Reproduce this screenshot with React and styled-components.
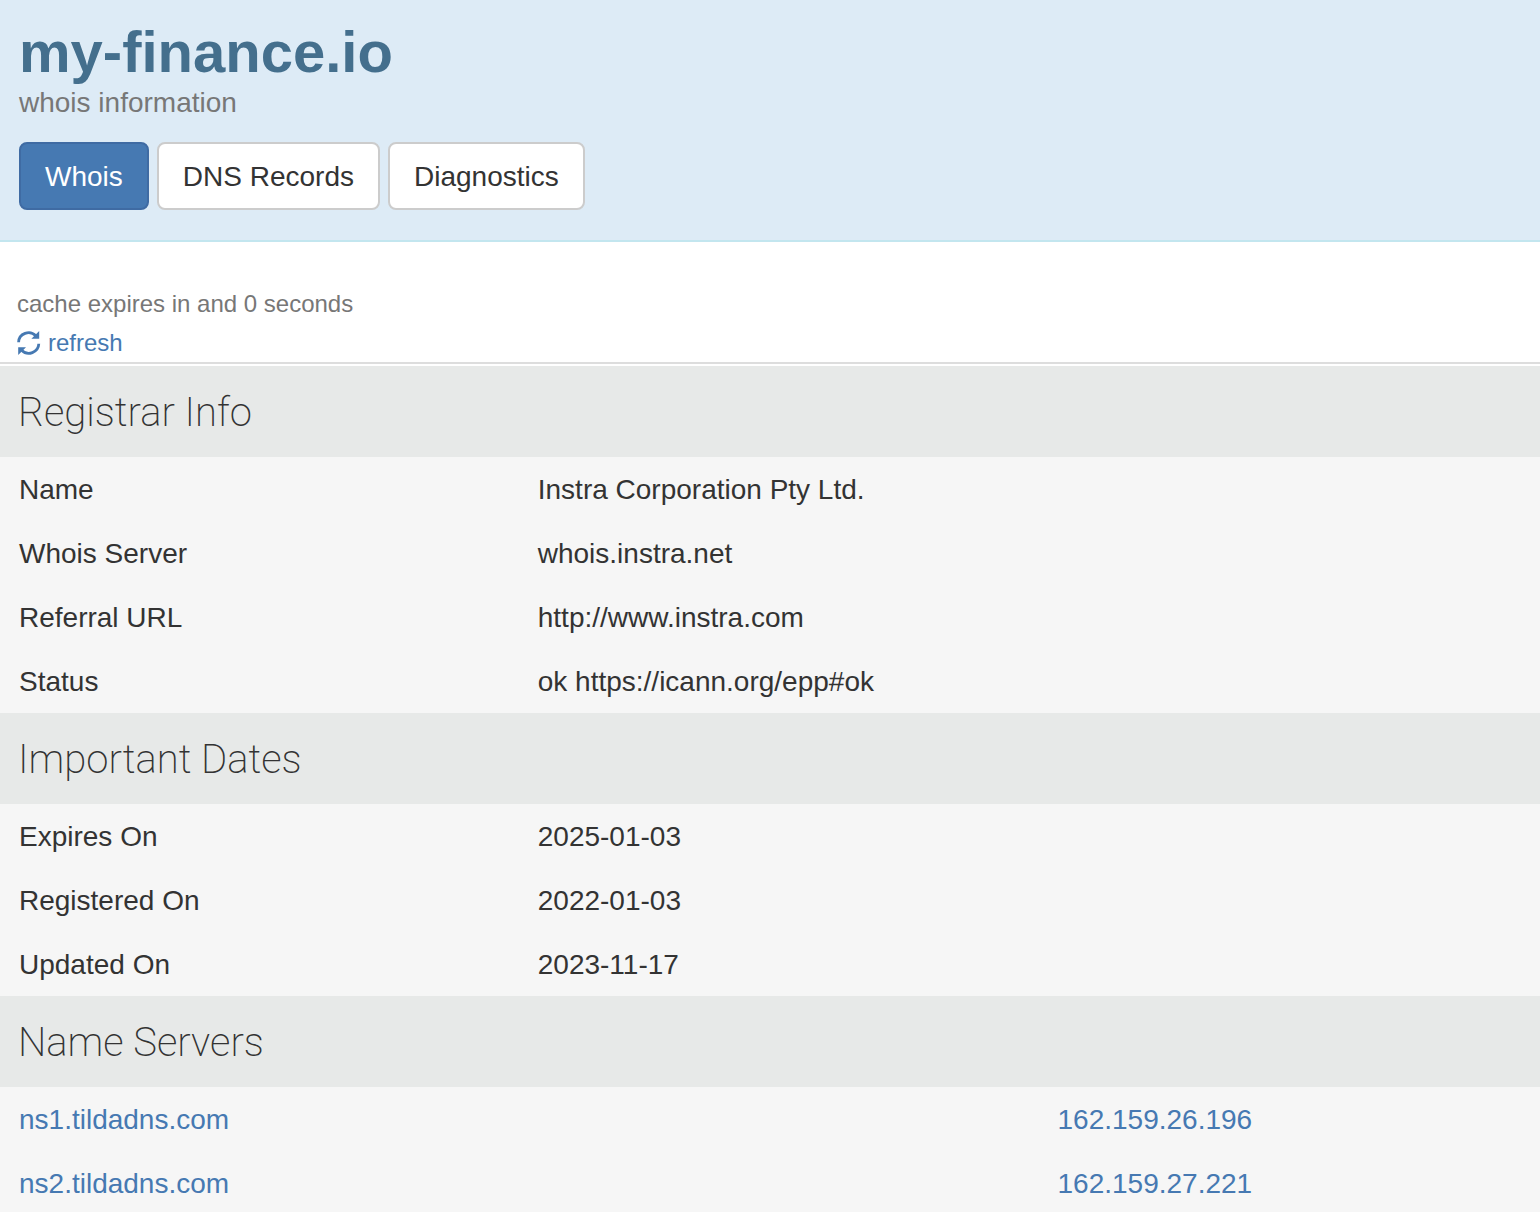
import React from "react";
import styled, { createGlobalStyle } from "styled-components";

const registrar = [
  ["Name", "Instra Corporation Pty Ltd."],
  ["Whois Server", "whois.instra.net"],
  ["Referral URL", "http://www.instra.com"],
  ["Status", "ok https://icann.org/epp#ok"],
];

const dates = [
  ["Expires On", "2025-01-03"],
  ["Registered On", "2022-01-03"],
  ["Updated On", "2023-11-17"],
];

const nameServers = [
  ["ns1.tildadns.com", "162.159.26.196"],
  ["ns2.tildadns.com", "162.159.27.221"],
];

const RefreshIcon = () => (
  <Icon viewBox="0 0 24 24" aria-hidden="true">
    <path
      d="M1.600 11.200A10 9.800 0 0 1 18.800 4.800M21.800 12.800A10 9.800 0 0 1 4.600 19.200"
      fill="none"
      stroke="currentColor"
      strokeWidth="2.8"
    />
    <path d="M22.200 0v7.800h-7.800zM1.200 24v-7.800h7.800z" />
  </Icon>
);

const InfoSection = ({ title, rows }) => (
  <section>
    <SectionTitle>{title}</SectionTitle>
    <Table>
      <tbody>
        {rows.map(([label, value]) => (
          <tr key={label}>
            <Label scope="row">{label}</Label>
            <Cell>{value}</Cell>
          </tr>
        ))}
      </tbody>
    </Table>
  </section>
);

const App = () => {
  return (
    <>
      <GlobalStyle />
      <Header>
        <Title>my-finance.io</Title>
        <Subtitle>whois information</Subtitle>
        <Tabs>
          <Tab type="button" $active>
            Whois
          </Tab>
          <Tab type="button">DNS Records</Tab>
          <Tab type="button">Diagnostics</Tab>
        </Tabs>
      </Header>

      <main>
        <Cache>
          <CacheText>cache expires in and 0 seconds</CacheText>
          <Refresh href="#refresh">
            <RefreshIcon />
            refresh
          </Refresh>
        </Cache>

        <InfoSection title="Registrar Info" rows={registrar} />
        <InfoSection title="Important Dates" rows={dates} />

        <section>
          <SectionTitle>Name Servers</SectionTitle>
          <Table>
            <tbody>
              {nameServers.map(([host, ip]) => (
                <tr key={host}>
                  <Label scope="row" $wide>
                    <Link href={`#${host}`}>{host}</Link>
                  </Label>
                  <Cell>
                    <Link href={`#${ip}`}>{ip}</Link>
                  </Cell>
                </tr>
              ))}
            </tbody>
          </Table>
        </section>
      </main>
    </>
  );
};

export default App;

const GlobalStyle = createGlobalStyle`
  * {
    box-sizing: border-box;
  }
  body {
    margin: 0;
    background-color: white;
    color: #333333;
    font-family: "Liberation Sans", Arial, sans-serif;
    font-size: 28px;
    line-height: 40px;
  }
`;
const Header = styled.header`
  padding: 20px 19px 30px;
  background-color: #ddebf6;
  border-bottom: 2px solid #c3e6ef;
`;
const Title = styled.h1`
  margin: 0;
  color: #446f8d;
  font-size: 58px;
  font-weight: 700;
  line-height: 64px;
`;
const Subtitle = styled.p`
  margin: 0 0 20px;
  color: #777777;
  line-height: 38px;
`;
const Tabs = styled.nav`
  display: flex;
  flex-wrap: wrap;
  gap: 8px;
`;
const Tab = styled.button`
  padding: 13px 24px 11px;
  border: 2px solid ${(props) => (props.$active ? "#3f6ba3" : "#cccccc")};
  border-radius: 8px;
  background-color: ${(props) => (props.$active ? "#4679b2" : "white")};
  color: ${(props) => (props.$active ? "white" : "#333333")};
  font: inherit;
  cursor: pointer;
`;
const Cache = styled.div`
  margin-bottom: 2px;
  padding: 42px 17px 0;
  border-bottom: 2px solid #dddddd;
  font-size: 24px;
`;
const CacheText = styled.p`
  margin: 0;
  color: #777777;
`;
const Link = styled.a`
  color: #4679b2;
  text-decoration: none;
  :hover {
    text-decoration: underline;
  }
`;
const Refresh = styled(Link)`
  display: flex;
  width: fit-content;
  align-items: center;
  gap: 7px;
  line-height: 38px;
`;
const Icon = styled.svg`
  width: 24px;
  height: 24px;
  fill: currentColor;
`;
const SectionTitle = styled.h2`
  margin: 0;
  padding: 23px 18px 20px;
  background-color: #e7e9e8;
  font-family: Roboto, "Liberation Sans", sans-serif;
  font-size: 40px;
  font-weight: 200;
  line-height: 48px;
`;
const Table = styled.table`
  width: 100%;
  border-collapse: collapse;
  table-layout: fixed;
  background-color: #f6f6f6;
`;
const Cell = styled.td`
  padding: 13px 18px 11px;
  text-align: left;
`;
const Label = styled.th`
  width: ${(props) => (props.$wide ? "67.5%" : "33.75%")};
  padding: 13px 19px 11px;
  font-weight: 400;
  text-align: left;
`;
